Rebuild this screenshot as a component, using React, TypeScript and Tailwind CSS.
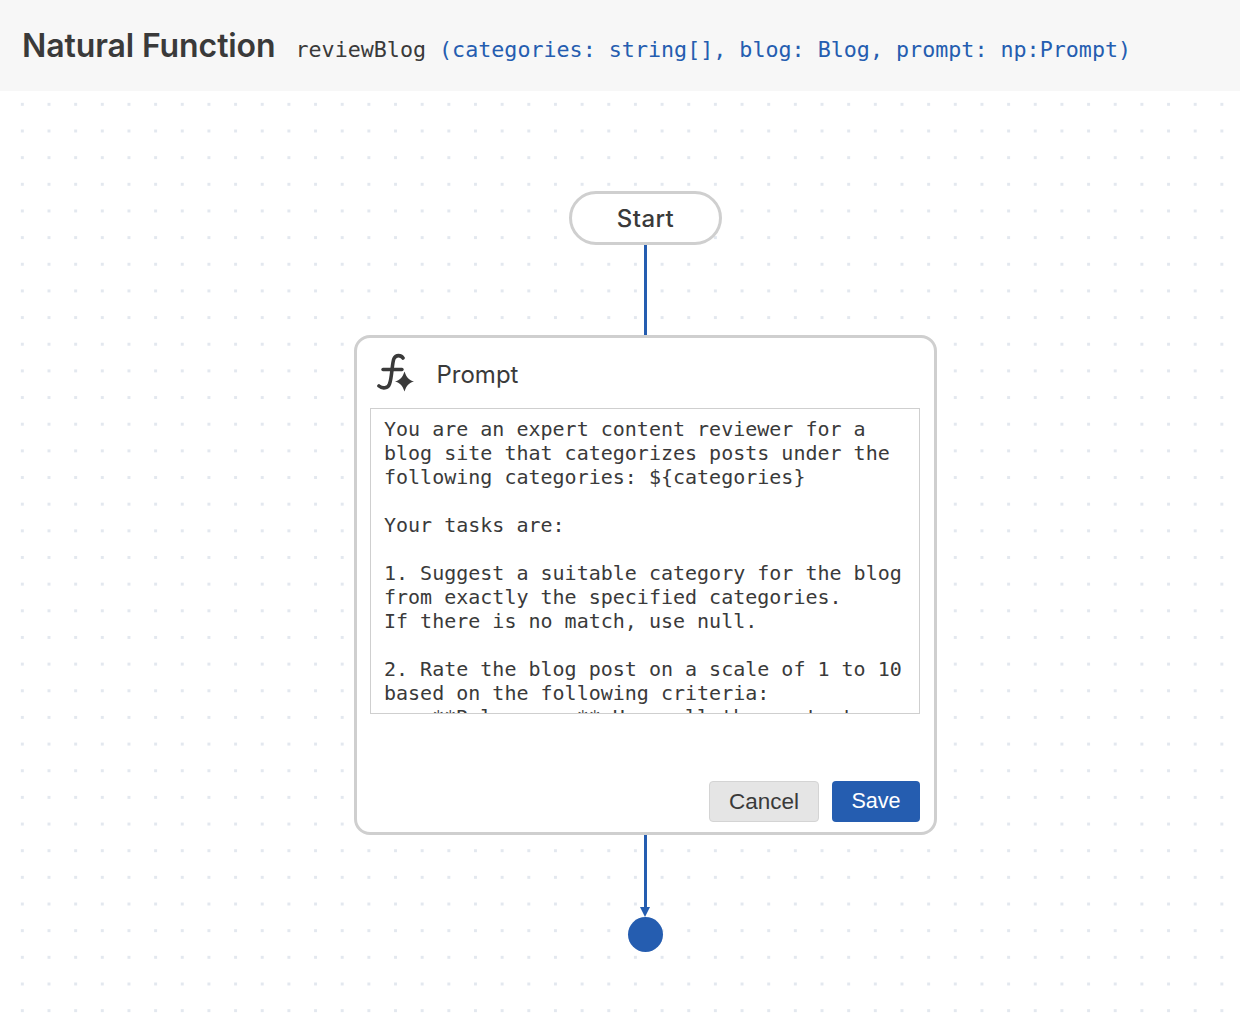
const PROMPT = `You are an expert content reviewer for a
blog site that categorizes posts under the
following categories: \${categories}

Your tasks are:

1. Suggest a suitable category for the blog
from exactly the specified categories.
If there is no match, use null.

2. Rate the blog post on a scale of 1 to 10
based on the following criteria:
    **Relevance:** How well the content`

function PromptIcon() {
  return (
    <svg width="38" height="40" viewBox="0 0 38 40" fill="none" className="shrink-0">
      <path
        d="M26 5 C24 2 19 1.5 17 5.5 C15 9.5 15 25 12.5 31 C11 35.5 5.5 36 2 33"
        stroke="#3a3a3a"
        strokeWidth="3.6"
        strokeLinecap="round"
      />
      <path d="M6 16.5 H25" stroke="#3a3a3a" strokeWidth="3.4" strokeLinecap="round" />
      <path d="M27.5 18.5 C29.5 24.5 32 27 37 28.5 C32 30 29.5 32.5 27.5 38.5 C25.5 32.5 23 30 18 28.5 C23 27 25.5 24.5 27.5 18.5 Z" fill="#3a3a3a" />
    </svg>
  )
}

export default function App() {
  return (
    <div className="flex min-h-screen flex-col bg-white text-[#3a3a3a]">
      <header className="flex h-[91px] items-center gap-[20px] bg-[#f7f7f7] pl-[22px]">
        <h1 className="font-['Inter',sans-serif] text-[32px] font-semibold tracking-[-0.1px]">Natural Function</h1>
        <div className="flex gap-[13px] pt-[9px] font-['DejaVu_Sans_Mono',monospace] text-[21.7px]">
          <span>reviewBlog</span>
          <span className="text-[#255db0]">(categories: string[], blog: Blog, prompt: np:Prompt)</span>
        </div>
      </header>

      <main className="flex h-[933px] flex-col items-center bg-[radial-gradient(#e3e8ef_1.5px,transparent_1.5px)] bg-[size:26.67px_26.67px] bg-[position:9px_0px] pt-[100px] pl-[50px]">
        <div className="ml-[1px] flex h-[54px] w-[153px] items-center justify-center rounded-full border-[3px] border-[#cfcfcf] bg-white pt-[1px] font-['Inter',sans-serif] text-[24px] font-medium tracking-[0.4px]">
          Start
        </div>
        <div className="h-[90px] w-[3px] bg-[#255db0]" />

        <section className="flex h-[500px] w-[583px] flex-col rounded-[16px] border-[3px] border-[#cfcfcf] bg-white pr-[14px] pl-[13px] pt-[13px] pb-[10px]">
          <div className="flex h-[57px] items-start gap-[22px] pl-[7px] pt-[2px]">
            <PromptIcon />
            <span className="pt-[4px] font-['Inter',sans-serif] text-[24px]">Prompt</span>
          </div>
          <div className="h-[306px] overflow-hidden border border-[#cfcfcf] pl-[13.5px] pt-[8px] font-['DejaVu_Sans_Mono',monospace] text-[20px] leading-[24px] whitespace-pre">
            {PROMPT}
          </div>
          <div className="mt-auto flex justify-end gap-[13px] font-['Liberation_Sans',sans-serif]">
            <button className="h-[41px] w-[110px] rounded-[4px] border border-[#d4d4d4] bg-[#e5e5e5] pl-[1px] text-[22.5px]">Cancel</button>
            <button className="h-[41px] w-[88px] rounded-[4px] bg-[#255db0] pl-[1px] text-[21.6px] text-white">Save</button>
          </div>
        </section>

        <div className="h-[72px] w-[3px] bg-[#255db0]" />
        <svg width="10" height="10" viewBox="0 0 10 10" className="block">
          <path d="M0 0 H10 L5 10 Z" fill="#255db0" />
        </svg>
        <div className="h-[35px] w-[35px] rounded-full bg-[#255db0]" />
      </main>
    </div>
  )
}
